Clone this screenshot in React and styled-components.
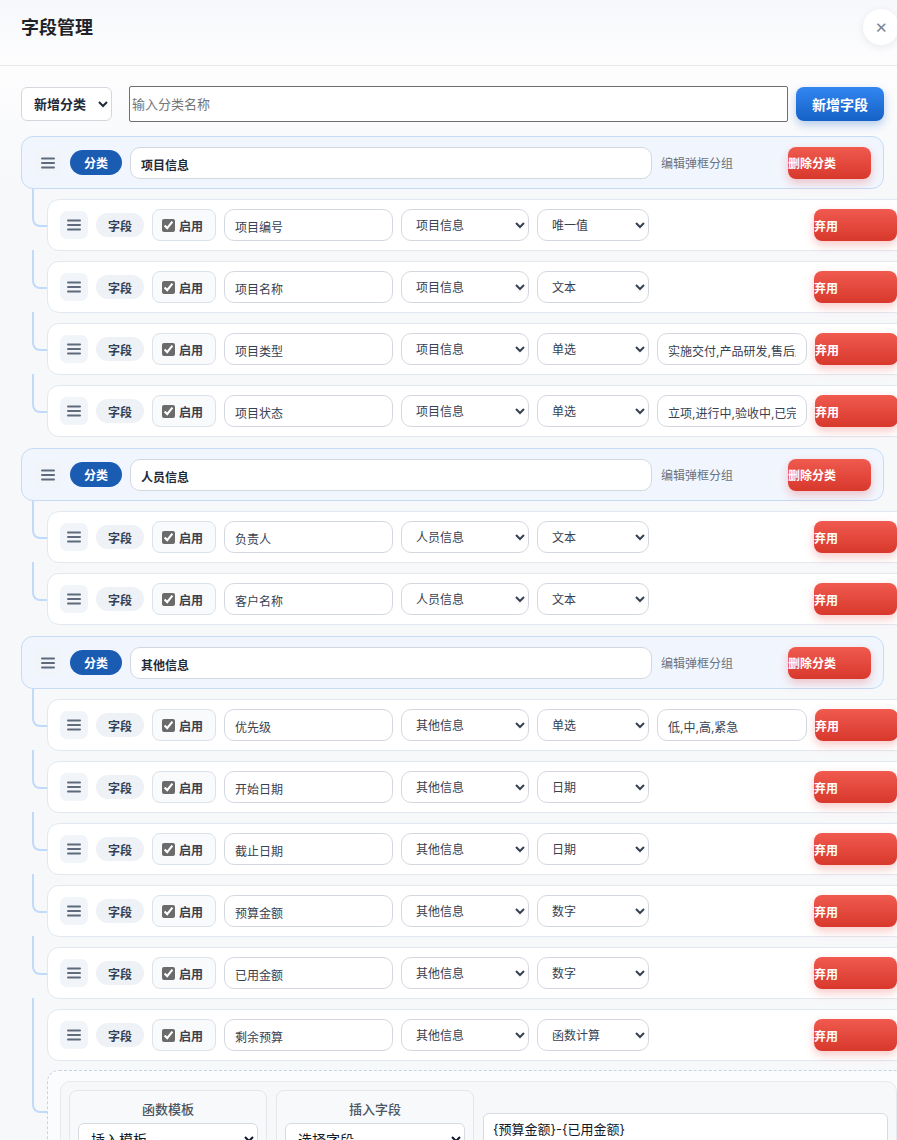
import styled, { createGlobalStyle } from "styled-components"

const GlobalStyle = createGlobalStyle`
  html, body {
    margin: 0;
    overflow: hidden;
    background: #f7f8fa;
  }
  body {
    font-family: "Inter", "Noto Sans CJK SC", sans-serif;
    color: #1f2937;
  }
  * { box-sizing: border-box; }
`

const Modal = styled.div`
  width: 897px;
  min-height: 1140px;
  background: linear-gradient(90deg, #eef0f3 0, #f7f8fa 22px);
`

const Header = styled.div`
  height: 66px;
  display: flex;
  justify-content: space-between;
  align-items: flex-start;
  padding: 16px 0 0 21px;
  background: linear-gradient(180deg, #f6f8fb, #fdfdfe);
  border-bottom: 1px solid #e6e8ec;
`

const Title = styled.h2`
  margin: 0;
  font-size: 18px;
  line-height: 24px;
  font-weight: 700;
  color: #1f2329;
`

const Close = styled.button`
  width: 36px;
  height: 36px;
  margin: -7px -2px 0 0;
  border: none;
  border-radius: 50%;
  background: #fff;
  box-shadow: 0 2px 8px rgba(15, 23, 42, 0.08);
  color: #7b8290;
  font-size: 15px;
  line-height: 1;
  display: flex;
  align-items: center;
  justify-content: center;
`

const Body = styled.div`
  padding: 20px 0 0 21px;
  background: linear-gradient(180deg, #fdfdfe 0, #f7f8fa 120px);
`

const Toolbar = styled.div`
  width: 863px;
  display: flex;
  align-items: center;
  gap: 8px;
`

const KindSelect = styled.select`
  width: 91px;
  height: 34px;
  margin-right: 9px;
  padding: 0 8px;
  border: 1px solid #d4d8de;
  border-radius: 6px;
  background: #fff;
  font: 700 13px "Inter", "Noto Sans CJK SC", sans-serif;
  color: #1f2937;
`

const NameInput = styled.input`
  flex: 1;
  height: 36px;
  padding: 0 2px;
  border: 1px solid #6f6f6f;
  border-radius: 2px;
  background: #fff;
  font: 13px "Inter", "Noto Sans CJK SC", sans-serif;
  &::placeholder { color: #757575; }
`

const PrimaryButton = styled.button`
  width: 88px;
  height: 34px;
  border: none;
  border-radius: 8px;
  background: linear-gradient(180deg, #3286f0, #1561c6);
  box-shadow: 0 4px 10px rgba(21, 97, 198, 0.3);
  color: #fff;
  font: 700 14px "Inter", "Noto Sans CJK SC", sans-serif;
`

const Sections = styled.div`
  margin-top: 14px;
  display: flex;
  flex-direction: column;
  gap: 11px;
`

const Section = styled.div`
  display: flex;
  flex-direction: column;
  gap: 10px;
`

const CategoryBar = styled.div`
  width: 863px;
  height: 53px;
  display: flex;
  align-items: center;
  gap: 8px;
  padding: 0 12px;
  background: #f1f6fe;
  border: 1px solid #c5dbf6;
  border-radius: 12px;
`

const Handle = styled.span`
  flex: none;
  width: 28px;
  height: 28px;
  border-radius: 7px;
  background: #f1f4f8;
  display: flex;
  align-items: center;
  justify-content: center;
`

const Tag = styled.span`
  flex: none;
  height: ${p => (p.$solid ? 25 : 24)}px;
  width: ${p => (p.$solid ? 52 : 48)}px;
  border-radius: 13px;
  display: flex;
  align-items: center;
  justify-content: center;
  font-size: 12px;
  font-weight: ${p => (p.$solid ? 700 : 600)};
  background: ${p => (p.$solid ? "#1b5cb3" : "#eef2f7")};
  color: ${p => (p.$solid ? "#fff" : "#334155")};
`

const Field = styled.input`
  flex: none;
  width: ${p => p.$w}px;
  height: 32px;
  padding: 3px 10px 0;
  border: 1px solid #d3d8e0;
  border-radius: 10px;
  background: #fff;
  font: ${p => (p.$bold ? 700 : 400)} 12px "Inter", "Noto Sans CJK SC", sans-serif;
  color: ${p => (p.$bold ? "#1f2937" : "#374151")};
`

const Select = styled.select`
  flex: none;
  width: ${p => p.$w}px;
  height: 32px;
  padding: 0 8px 0 10px;
  border: 1px solid #d3d8e0;
  border-radius: 10px;
  background: #fff;
  font: 12px "Inter", "Noto Sans CJK SC", sans-serif;
  color: #374151;
`

const GroupHint = styled.span`
  margin-left: 1px;
  font-size: 12px;
  color: #6b7280;
`

const DangerButton = styled.button`
  flex: none;
  margin-left: auto;
  width: 83px;
  height: 32px;
  padding: 0;
  border: none;
  border-radius: 8px;
  background: linear-gradient(180deg, #f05a4f, #d8382c);
  box-shadow: 0 4px 10px rgba(229, 57, 53, 0.28);
  color: #fff;
  font: 700 12px "Inter", "Noto Sans CJK SC", sans-serif;
  text-align: left;
`

const Item = styled.div`
  position: relative;
  margin-left: 26px;
  display: flex;
  flex-direction: column;
  gap: 9px;

  &::before {
    content: "";
    position: absolute;
    left: -15px;
    top: -11px;
    width: 13px;
    height: ${p => p.$reach}px;
    border-left: 2px solid #c2dafa;
    border-bottom: 2px solid #c2dafa;
    border-bottom-left-radius: 8px;
  }
`

const FieldRow = styled.div`
  width: 863px;
  height: 52px;
  display: flex;
  align-items: center;
  gap: 8px;
  padding: 0 12px;
  background: #fff;
  border: 1px solid #e2e8f0;
  border-radius: 12px;
`

const Toggle = styled.label`
  flex: none;
  width: 64px;
  height: 32px;
  display: flex;
  align-items: center;
  gap: 4px;
  padding-left: 9px;
  border: 1px solid #dce2ea;
  border-radius: 8px;
  background: #f8fafc;
  font-size: 12px;
  font-weight: 600;
  color: #374151;

  input {
    margin: 0;
    width: 13px;
    height: 13px;
    accent-color: #6b6b6b;
  }
`

const FormulaBox = styled.div`
  width: 863px;
  padding: 10px 12px;
  border: 1px dashed #c8d3e0;
  border-radius: 12px;
  background: #fbfcfd;
`

const FormulaInner = styled.div`
  display: flex;
  align-items: flex-start;
  gap: 9px;
  padding: 8px;
  border: 1px solid #e6e9ee;
  border-radius: 10px;
  background: #f7f8fa;
`

const Tool = styled.div`
  flex: none;
  width: 198px;
  height: 120px;
  padding: 8px;
  display: flex;
  flex-direction: column;
  gap: 4px;
  border: 1px solid #e3e6eb;
  border-radius: 8px;
  background: #f8f9fb;
`

const ToolLabel = styled.div`
  text-align: center;
  font-size: 13px;
  line-height: 20px;
  font-weight: 500;
  color: #4b5563;
`

const ToolSelect = styled.select`
  width: 100%;
  height: 32px;
  padding: 0 8px;
  border: 1px solid #d8dce2;
  border-radius: 6px;
  background: #fff;
  font: 14px "Inter", "Noto Sans CJK SC", sans-serif;
  color: #111827;
`

const Expr = styled.textarea`
  flex: 1;
  height: 80px;
  margin-top: 23px;
  padding: 5px 9px;
  border: 1px solid #d8dce2;
  border-radius: 6px;
  background: #fff;
  resize: none;
  font: 13px "Inter", "Noto Sans CJK SC", sans-serif;
  color: #111827;
`

function Bars() {
  return (
    <svg width="16" height="16" viewBox="0 0 16 16">
      <g stroke="#5f6b7c" strokeWidth="2" strokeLinecap="round">
        <line x1="2" y1="3.5" x2="14" y2="3.5" />
        <line x1="2" y1="8" x2="14" y2="8" />
        <line x1="2" y1="12.5" x2="14" y2="12.5" />
      </g>
    </svg>
  )
}

const groups = ["项目信息", "人员信息", "其他信息"]
const types = ["文本", "数字", "日期", "单选", "唯一值", "函数计算"]

const categories = [
  {
    name: "项目信息",
    fields: [
      { name: "项目编号", type: "唯一值" },
      { name: "项目名称", type: "文本" },
      { name: "项目类型", type: "单选", options: "实施交付,产品研发,售后服务" },
      { name: "项目状态", type: "单选", options: "立项,进行中,验收中,已完成" },
    ],
  },
  {
    name: "人员信息",
    fields: [
      { name: "负责人", type: "文本" },
      { name: "客户名称", type: "文本" },
    ],
  },
  {
    name: "其他信息",
    fields: [
      { name: "优先级", type: "单选", options: "低,中,高,紧急" },
      { name: "开始日期", type: "日期" },
      { name: "截止日期", type: "日期" },
      { name: "预算金额", type: "数字" },
      { name: "已用金额", type: "数字" },
      { name: "剩余预算", type: "函数计算", formula: "{预算金额}-{已用金额}" },
    ],
  },
]

function FieldItem({ field, group }) {
  return (
    <Item $reach={field.formula ? 113 : 37}>
      <FieldRow>
        <Handle><Bars /></Handle>
        <Tag>字段</Tag>
        <Toggle>
          <input type="checkbox" defaultChecked />
          启用
        </Toggle>
        <Field $w={169} defaultValue={field.name} />
        <Select $w={128} defaultValue={group}>
          {groups.map(g => <option key={g}>{g}</option>)}
        </Select>
        <Select $w={112} defaultValue={field.type}>
          {types.map(t => <option key={t}>{t}</option>)}
        </Select>
        {field.options && <Field $w={150} defaultValue={field.options} />}
        <DangerButton>弃用</DangerButton>
      </FieldRow>
      {field.formula && (
        <FormulaBox>
          <FormulaInner>
            <Tool>
              <ToolLabel>函数模板</ToolLabel>
              <ToolSelect><option>插入模板</option></ToolSelect>
            </Tool>
            <Tool>
              <ToolLabel>插入字段</ToolLabel>
              <ToolSelect><option>选择字段</option></ToolSelect>
            </Tool>
            <Expr defaultValue={field.formula} />
          </FormulaInner>
        </FormulaBox>
      )}
    </Item>
  )
}

export default function App() {
  return (
    <Modal>
      <GlobalStyle />
      <Header>
        <Title>字段管理</Title>
        <Close>✕</Close>
      </Header>
      <Body>
        <Toolbar>
          <KindSelect><option>新增分类</option></KindSelect>
          <NameInput placeholder="输入分类名称" />
          <PrimaryButton>新增字段</PrimaryButton>
        </Toolbar>
        <Sections>
          {categories.map(cat => (
            <Section key={cat.name}>
              <CategoryBar>
                <Handle><Bars /></Handle>
                <Tag $solid>分类</Tag>
                <Field $w={522} $bold defaultValue={cat.name} />
                <GroupHint>编辑弹框分组</GroupHint>
                <DangerButton>删除分类</DangerButton>
              </CategoryBar>
              {cat.fields.map(f => (
                <FieldItem key={f.name} field={f} group={cat.name} />
              ))}
            </Section>
          ))}
        </Sections>
      </Body>
    </Modal>
  )
}
